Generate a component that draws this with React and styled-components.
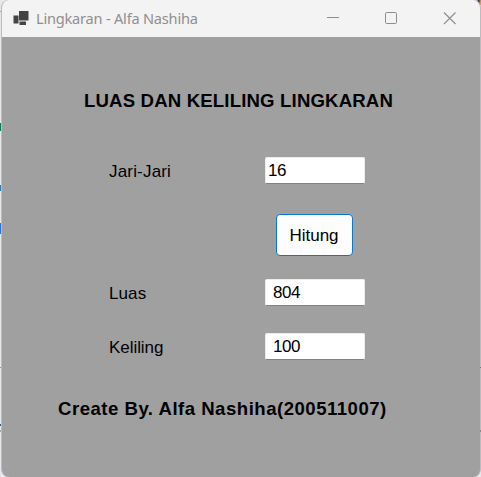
import React from "react";
import styled, { createGlobalStyle } from "styled-components";

const GlobalStyle = createGlobalStyle`
  * { box-sizing: border-box; }
  body { margin: 0; background: #e9e9ec; overflow: hidden; }
`;

const Desktop = styled.div`
  position: relative;
  width: 481px;
  height: 477px;
  padding-left: 1px;
  background: #e6e7ea;
`;

const EdgeMark = styled.span`
  position: absolute;
  z-index: 1;
  left: ${(p) => (p.$right ? "480px" : "0")};
  top: ${(p) => p.$top}px;
  width: 1px;
  height: ${(p) => p.$size}px;
  background: ${(p) => p.$color};
`;

const CornerMark = styled.span`
  position: absolute;
  right: 0;
  top: 0;
  width: 8px;
  height: 5px;
  background: linear-gradient(100deg, #b9c3d4 45%, #26364f 65%, #d99a52 90%);
`;

const Window = styled.main`
  position: relative;
  display: flex;
  flex-direction: column;
  height: 477px;
  overflow: hidden;
  border: solid #bcbcbe;
  border-width: 0 1px 0 1px;
  border-radius: 8px;
  background: #a0a0a0;
`;

const TitleBar = styled.header`
  display: flex;
  align-items: center;
  flex: 0 0 37px;
  padding: 0 1px 0 11px;
  background: #f3f3f3;
`;

const Caption = styled.h1`
  flex: 1;
  margin: 0 0 1px 7px;
  font: 400 14.6px/20px "Noto Sans", sans-serif;
  letter-spacing: ${(p) => p.$spacing}px;
  color: #8f8f8f;
  white-space: nowrap;
`;

const WindowButton = styled.button`
  display: grid;
  place-items: center;
  width: 59px;
  height: 37px;
  padding: 0;
  border: 0;
  background: transparent;
`;

const Form = styled.form`
  display: flex;
  flex-direction: column;
  color: #000;
  font: 400 17px/20px "Liberation Sans", Arial, sans-serif;
`;

const Heading = styled.h2`
  margin: ${(p) => p.$margin};
  font-size: 18.6px;
  line-height: 20px;
  font-weight: 700;
  letter-spacing: ${(p) => p.$spacing}px;
  white-space: nowrap;
`;

const Field = styled.label`
  display: grid;
  grid-template-columns: 156px 100px;
  height: 27px;
  margin: ${(p) => p.$top}px 0 0 107px;
`;

const FieldName = styled.span`
  padding-top: 5px;
  letter-spacing: ${(p) => p.$spacing}px;
`;

const TextBox = styled.input`
  width: 100px;
  height: 27px;
  padding: 1px 0 0 ${(p) => p.$inset}px;
  border: 1px solid #ececec;
  border-bottom-color: #828282;
  border-radius: 2px;
  outline: 0;
  background: #fff;
  color: #000;
  font: inherit;
  letter-spacing: -0.5px;
`;

const CalculateButton = styled.button`
  width: 77px;
  height: 42px;
  margin: 30px 0 0 274px;
  padding: 2px 1px 0 0;
  border: 1px solid #0878d0;
  border-radius: 4px;
  background: #fdfdfd;
  color: #000;
  font: inherit;
`;

export default function App() {
  return (
    <Desktop>
      <GlobalStyle />
      <EdgeMark $top={11} $size={1} $color="#9da3b8" />
      <EdgeMark $top={123} $size={8} $color="#087b55" />
      <EdgeMark $top={185} $size={6} $color="#3274bd" />
      <EdgeMark $top={223} $size={11} $color="#2d70e4" />
      <EdgeMark $top={367} $size={1} $color="#929292" />
      <EdgeMark $top={424} $size={2} $color="#315b9e" />
      <EdgeMark $top={430} $size={2} $color="#aaa" />
      <EdgeMark $right $top={367} $size={1} $color="#777" />
      <EdgeMark $right $top={430} $size={2} $color="#888" />
      <CornerMark />
      <Window>
        <TitleBar>
          <svg width="16" height="16" viewBox="0 0 16 16" fill="#444">
            <rect x="6" y="0" width="9.5" height="9.5" />
            <rect x="0.5" y="4.5" width="5" height="8" />
            <rect x="6.5" y="10.5" width="6.5" height="3.5" />
          </svg>
          <Caption $spacing={-0.22}>Lingkaran - Alfa Nashiha</Caption>
          <WindowButton aria-label="Minimize">
            <svg width="17" height="13" fill="none" stroke="#8d8d8d">
              <path d="M4 5.5h12" />
            </svg>
          </WindowButton>
          <WindowButton aria-label="Maximize">
            <svg width="13" height="13" fill="none" stroke="#8d8d8d">
              <rect x="1.5" y="0.5" width="11" height="11" rx="1.2" />
            </svg>
          </WindowButton>
          <WindowButton aria-label="Close">
            <svg width="13" height="13" fill="none" stroke="#8d8d8d" strokeWidth="1.1">
              <path d="M1 0.5l11.5 11.5M12.5 0.5l-11.5 11.5" />
            </svg>
          </WindowButton>
        </TitleBar>
        <Form onSubmit={(e) => e.preventDefault()}>
          <Heading $margin="54px 0 0 82px" $spacing={0.16}>
            LUAS DAN KELILING LINGKARAN
          </Heading>
          <Field $top={46}>
            <FieldName $spacing={0.18}>Jari-Jari</FieldName>
            <TextBox $inset={2} defaultValue="16" />
          </Field>
          <CalculateButton type="submit">Hitung</CalculateButton>
          <Field $top={23}>
            <FieldName $spacing={0.1}>Luas</FieldName>
            <TextBox $inset={7} defaultValue="804" />
          </Field>
          <Field $top={27}>
            <FieldName $spacing={-0.05}>Keliling</FieldName>
            <TextBox $inset={7} defaultValue="100" />
          </Field>
          <Heading $margin="39px 0 0 56px" $spacing={0.49}>
            Create By. Alfa Nashiha(200511007)
          </Heading>
        </Form>
      </Window>
    </Desktop>
  );
}
